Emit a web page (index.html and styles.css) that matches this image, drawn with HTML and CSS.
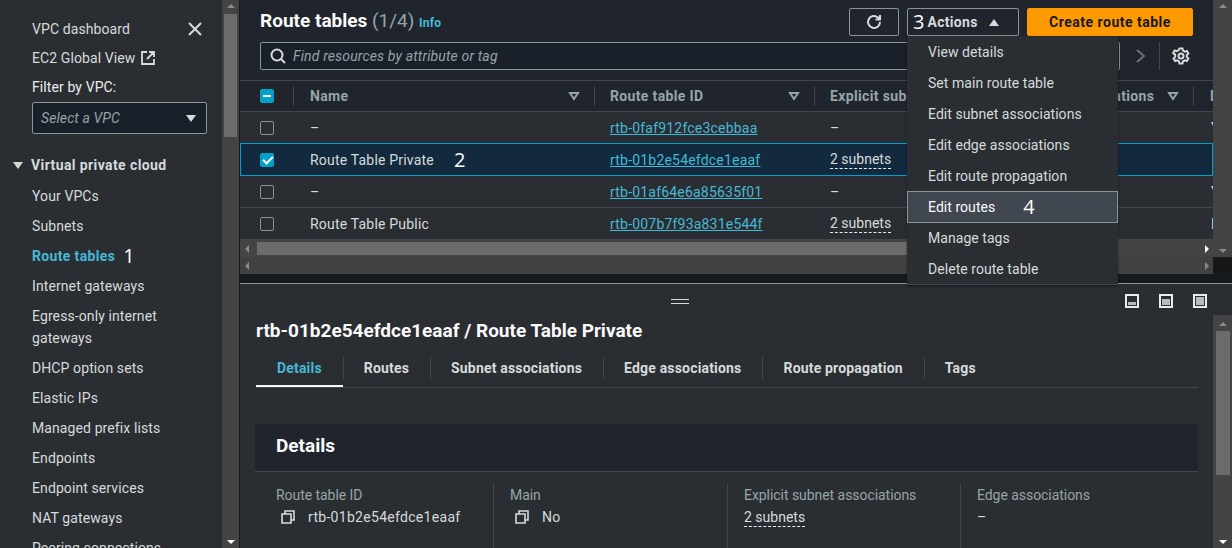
FILE: index.html
```html
<!DOCTYPE html>
<html lang="en">
<head>
  <meta charset="UTF-8" />
  <title>Route tables</title>
  <link rel="stylesheet" href="styles.css">
</head>
<body>
  <div class="app">
    <aside class="sidebar">
      <nav class="side-nav">
        <div class="side-top">
          <a class="side-link">VPC dashboard</a>
          <svg class="close-icon" width="16" height="16" viewBox="0 0 16 16"><path d="M2 2l12 12M14 2L2 14" /></svg>
        </div>
        <a class="side-link ec2-link">EC2 Global View
          <svg class="ext-icon" width="16" height="16" viewBox="0 0 16 16"><path d="M7 2H2v12h12V9M9 2h5v5M14 2L7 9" /></svg>
        </a>
        <div class="filter-label">Filter by VPC:</div>
        <div class="vpc-select"><span>Select a VPC</span><i class="tri-down"></i></div>
        <div class="side-group"><i class="tri-down small"></i>Virtual private cloud</div>
        <a class="side-link">Your VPCs</a>
        <a class="side-link">Subnets</a>
        <a class="side-link active">Route tables<span class="mark mark-nav">1</span></a>
        <a class="side-link">Internet gateways</a>
        <a class="side-link">Egress-only internet gateways</a>
        <a class="side-link">DHCP option sets</a>
        <a class="side-link">Elastic IPs</a>
        <a class="side-link">Managed prefix lists</a>
        <a class="side-link">Endpoints</a>
        <a class="side-link">Endpoint services</a>
        <a class="side-link">NAT gateways</a>
        <a class="side-link">Peering connections</a>
      </nav>
      <div class="vscroll">
        <i class="arrow-up"></i>
        <div class="thumb side-thumb"></div>
        <i class="arrow-down bright"></i>
      </div>
    </aside>

    <main class="content">
      <section class="top-pane">
        <div class="top-main">
          <div class="top-body">
            <header class="list-head">
              <h1>Route tables <span class="count">(1/4)</span> <a class="info">Info</a></h1>
              <div class="head-btns">
                <button class="btn btn-refresh">
                  <svg width="18" height="18" viewBox="0 0 18 18"><path d="M15 9a6 6 0 1 1-2-4.500L15 6.500M15 2v4.500h-4.500" /></svg>
                </button>
                <button class="btn btn-actions"><span class="mark mark-btn">3</span>Actions<i class="tri-up"></i></button>
                <button class="btn btn-create">Create route table</button>
              </div>
            </header>

            <div class="filter-row">
              <div class="search">
                <svg width="16" height="16" viewBox="0 0 16 16"><circle cx="7" cy="7" r="5.500" /><path d="M11 11l4 4" /></svg>
                <span>Find resources by attribute or tag</span>
              </div>
              <svg class="pager" width="12" height="16" viewBox="0 0 12 16"><path d="M2 2l7 6-7 6" /></svg>
              <span class="pager-sep"></span>
              <svg class="gear" width="18" height="18" viewBox="0 0 18 18">
                <circle cx="9" cy="9" r="2.500" />
                <path d="M7.500 1.500h3l.5 2.200 1.800 1 2.100-.7 1.500 2.600-1.600 1.500v1.800l1.600 1.500-1.500 2.600-2.100-.7-1.800 1-.5 2.200h-3l-.5-2.200-1.800-1-2.100.7-1.500-2.600 1.600-1.500V7.600L1.100 6.100l1.500-2.600 2.100.7 1.800-1z" />
              </svg>
            </div>

            <div class="table">
              <div class="row head-row">
                <div class="cell check-cell"><i class="check indeterminate"></i></div>
                <div class="cell">Name<svg class="sort" width="12" height="10" viewBox="0 0 12 10"><path d="M2 2h8L6 8z" /></svg></div>
                <div class="cell">Route table ID<svg class="sort" width="12" height="10" viewBox="0 0 12 10"><path d="M2 2h8L6 8z" /></svg></div>
                <div class="cell">Explicit subnet associations<svg class="sort" width="12" height="10" viewBox="0 0 12 10"><path d="M2 2h8L6 8z" /></svg></div>
                <div class="cell">Edge associations<svg class="sort" width="12" height="10" viewBox="0 0 12 10"><path d="M2 2h8L6 8z" /></svg></div>
                <div class="cell">Main</div>
              </div>
              <div class="row">
                <div class="cell check-cell"><i class="check"></i></div>
                <div class="cell">–</div>
                <div class="cell"><a class="rtb">rtb-0faf912fce3cebbaa</a></div>
                <div class="cell">–</div>
                <div class="cell">–</div>
                <div class="cell">Yes</div>
              </div>
              <div class="row selected">
                <div class="cell check-cell"><i class="check checked"></i></div>
                <div class="cell">Route Table Private<span class="mark mark-row">2</span></div>
                <div class="cell"><a class="rtb">rtb-01b2e54efdce1eaaf</a></div>
                <div class="cell"><span class="dashed">2 subnets</span></div>
                <div class="cell">–</div>
                <div class="cell">No</div>
              </div>
              <div class="row">
                <div class="cell check-cell"><i class="check"></i></div>
                <div class="cell">–</div>
                <div class="cell"><a class="rtb">rtb-01af64e6a85635f01</a></div>
                <div class="cell">–</div>
                <div class="cell">–</div>
                <div class="cell">Yes</div>
              </div>
              <div class="row">
                <div class="cell check-cell"><i class="check"></i></div>
                <div class="cell">Route Table Public</div>
                <div class="cell"><a class="rtb">rtb-007b7f93a831e544f</a></div>
                <div class="cell"><span class="dashed">2 subnets</span></div>
                <div class="cell">–</div>
                <div class="cell">No</div>
              </div>
            </div>
          </div>
          <div class="hscroll">
            <i class="arrow-left"></i>
            <div class="thumb h-thumb"></div>
            <i class="arrow-right bright"></i>
          </div>
          <div class="vscroll top-vscroll">
            <i class="arrow-up"></i>
            <i class="arrow-down"></i>
          </div>
        </div>
        <div class="hscroll-row">
          <div class="hscroll lower">
            <i class="arrow-left"></i>
            <i class="arrow-right"></i>
          </div>
          <div class="corner"></div>
        </div>
        <div class="pane-gap"></div>

        <div class="menu">
          <a>View details</a>
          <a>Set main route table</a>
          <a>Edit subnet associations</a>
          <a>Edit edge associations</a>
          <a>Edit route propagation</a>
          <a class="hover">Edit routes<span class="mark mark-menu">4</span></a>
          <a>Manage tags</a>
          <a>Delete route table</a>
        </div>
      </section>

      <section class="bottom-pane">
        <div class="split-bar">
          <div class="handle"></div>
          <div class="pane-icons">
            <svg width="14" height="14" viewBox="0 0 14 14"><path class="frame" d="M1 1h12v12H1z" /><path class="fill" d="M3 8h8v3H3z" /></svg>
            <svg width="14" height="14" viewBox="0 0 14 14"><path class="frame" d="M1 1h12v12H1z" /><path class="fill" d="M3 5h8v6H3z" /></svg>
            <svg width="14" height="14" viewBox="0 0 14 14"><path class="frame" d="M1 1h12v12H1z" /><path class="fill" d="M3 3h8v8H3z" /></svg>
          </div>
        </div>
        <div class="bottom-main">
          <div class="bottom-body">
            <h2 class="detail-title">rtb-01b2e54efdce1eaaf / Route Table Private</h2>
            <div class="tabs">
              <a class="tab current">Details</a>
              <a class="tab">Routes</a>
              <a class="tab">Subnet associations</a>
              <a class="tab">Edge associations</a>
              <a class="tab">Route propagation</a>
              <a class="tab">Tags</a>
            </div>
            <div class="card">
              <h3 class="card-head">Details</h3>
              <div class="card-cols">
                <div class="col">
                  <div class="col-label">Route table ID</div>
                  <div class="col-value copy-value">
                    <svg width="14" height="14" viewBox="0 0 14 14"><path d="M4 4V1h9v9h-3M1 4h9v9H1z" /></svg>
                    rtb-01b2e54efdce1eaaf
                  </div>
                </div>
                <div class="col">
                  <div class="col-label">Main</div>
                  <div class="col-value copy-value">
                    <svg width="14" height="14" viewBox="0 0 14 14"><path d="M4 4V1h9v9h-3M1 4h9v9H1z" /></svg>
                    No
                  </div>
                </div>
                <div class="col">
                  <div class="col-label">Explicit subnet associations</div>
                  <div class="col-value"><span class="dashed">2 subnets</span></div>
                </div>
                <div class="col">
                  <div class="col-label">Edge associations</div>
                  <div class="col-value">–</div>
                </div>
              </div>
            </div>
          </div>
          <div class="vscroll bottom-vscroll">
            <i class="arrow-up"></i>
            <div class="thumb bottom-thumb"></div>
            <i class="arrow-down bright"></i>
          </div>
        </div>
      </section>
    </main>
  </div>
</body>
</html>
```

FILE: styles.css
```css
* {
  box-sizing: border-box;
  margin: 0;
  padding: 0;
}

body {
  font-family: Roboto, 'Liberation Sans', sans-serif;
  font-size: 14px;
  line-height: 22px;
  letter-spacing: 0.2px;
  background: #2a2e33;
  color: #d5dbdb;
  overflow: hidden;
}

i {
  display: block;
}

svg {
  display: block;
  flex: none;
  fill: none;
  stroke: #d5dbdb;
  stroke-width: 2;
}

.app {
  display: flex;
  width: 1232px;
  height: 548px;
  overflow: hidden;
}

/* hand written numbers drawn on the screenshot */
.mark {
  font-family: 'Open Sans', sans-serif;
  font-size: 20px;
  font-weight: 400;
  line-height: 22px;
  letter-spacing: 0;
  color: #fff;
}

.mark-nav { margin-left: 8px; }
.mark-row { margin-left: 20px; }
.mark-btn { margin-right: 3px; }
.mark-menu { margin-left: 28px; }

/* sidebar */
.sidebar {
  display: flex;
  flex: none;
  width: 240px;
  height: 548px;
  border-right: 1px solid #16191f;
}

.side-nav {
  flex: 1;
  min-width: 0;
  padding: 18px 15px 0 32px;
  overflow: hidden;
  letter-spacing: 0.1px;
}

.side-top {
  display: flex;
  justify-content: space-between;
  padding-right: 4px;
}

.side-link {
  display: block;
  margin-bottom: 8px;
  color: #d5dbdb;
}

.side-link.active {
  display: flex;
  align-items: center;
  color: #44b9d6;
  font-weight: 700;
  letter-spacing: 0.35px;
}

.close-icon {
  margin-top: 3px;
}

.ec2-link {
  display: flex;
  align-items: center;
  gap: 5px;
  margin-top: -1px;
  margin-bottom: 7px;
}

.ext-icon {
  stroke-width: 1.800;
}

.filter-label {
  margin-bottom: 4px;
  color: #eaeded;
}

.vpc-select {
  display: flex;
  align-items: center;
  justify-content: space-between;
  height: 32px;
  padding: 0 10px 0 8px;
  margin-bottom: 20px;
  background: #1a2029;
  border: 1px solid #879596;
  border-radius: 2px;
  font-style: italic;
  color: #95a5a6;
}

.tri-down {
  width: 0;
  height: 0;
  border-left: 5.500px solid transparent;
  border-right: 5.500px solid transparent;
  border-top: 7px solid #d5dbdb;
}

.tri-down.small {
  margin: 0 8px 0 -19px;
}

.side-group {
  display: flex;
  align-items: center;
  margin-bottom: 9px;
  font-weight: 700;
  letter-spacing: 0.4px;
  color: #d5dbdb;
}

/* scrollbars */
.vscroll {
  display: flex;
  flex: none;
  flex-direction: column;
  align-items: center;
  justify-content: space-between;
  width: 17px;
  padding: 4px 0;
  background: #444;
}

.thumb {
  background: #6b6b6b;
}

.side-thumb {
  width: 13px;
  height: 123px;
  margin-top: 6px;
  margin-bottom: auto;
}

.arrow-up,
.arrow-down,
.arrow-left,
.arrow-right {
  width: 0;
  height: 0;
  flex: none;
  border: 4px solid transparent;
}

.arrow-up { border-top: 0; border-bottom: 4px solid #8a8a8a; }
.arrow-down { border-bottom: 0; border-top: 4px solid #8a8a8a; }
.arrow-left { border-left: 0; border-right: 4px solid #8a8a8a; }
.arrow-right { border-right: 0; border-left: 4px solid #8a8a8a; }
.arrow-down.bright { border-top-color: #fff; }
.arrow-right.bright { border-left-color: #fff; }

.hscroll {
  display: flex;
  align-items: center;
  justify-content: space-between;
  height: 17px;
  padding: 0 4px 0 5px;
  background: #444;
}

.h-thumb {
  flex: none;
  width: 760px;
  height: 13px;
  margin-left: 8px;
  margin-right: auto;
}

/* upper pane */
.content {
  display: flex;
  flex: 1;
  min-width: 0;
  flex-direction: column;
}

.top-pane {
  position: relative;
  flex: none;
  height: 284px;
  background: #20252d;
  border-bottom: 1px solid #8d9599;
}

.top-main {
  display: grid;
  grid-template-columns: 973px 19px;
  grid-template-rows: 240px 17px;
  height: 257px;
}

.top-body {
  overflow: hidden;
  min-width: 0;
}

.top-vscroll {
  grid-column: 2;
  grid-row: 1 / 3;
  width: 19px;
}

.hscroll-row {
  display: flex;
  height: 17px;
}

.hscroll.lower {
  flex: none;
  width: 973px;
  background: #414141;
}

.corner {
  flex: 1;
  background: #171717;
}

.pane-gap {
  height: 9px;
  background: #16191f;
}

.list-head {
  display: flex;
  align-items: center;
  justify-content: space-between;
  height: 28px;
  margin-top: 8px;
  padding: 0 20px 0 20px;
}

h1 {
  font-size: 19px;
  font-weight: 700;
  line-height: 28px;
  letter-spacing: 0;
  color: #fafafa;
}

.count {
  font-weight: 400;
  color: #95a5a6;
}

.info {
  font-size: 12px;
  letter-spacing: 0.2px;
  color: #44b9d6;
}

.head-btns {
  display: flex;
  gap: 8px;
}

.btn {
  display: flex;
  align-items: center;
  justify-content: center;
  height: 28px;
  font-family: inherit;
  font-size: 14px;
  font-weight: 700;
  letter-spacing: 0.3px;
  background: transparent;
  color: #d5dbdb;
  border: 1px solid #879596;
  border-radius: 2px;
}

.btn-refresh {
  width: 50px;
}

.btn-actions {
  justify-content: flex-start;
  width: 112px;
  padding-left: 5px;
}

.tri-up {
  width: 0;
  height: 0;
  margin-left: 11px;
  border-left: 5.500px solid transparent;
  border-right: 5.500px solid transparent;
  border-bottom: 7px solid #d5dbdb;
}

.btn-create {
  width: 166px;
  background: #ff9900;
  border-color: #ff9900;
  color: #16191f;
  letter-spacing: 0.5px;
}

.filter-row {
  display: flex;
  align-items: center;
  height: 28px;
  margin-top: 6px;
  padding-left: 20px;
}

.search {
  display: flex;
  align-items: center;
  gap: 7px;
  width: 860px;
  height: 28px;
  padding-left: 9px;
  background: #1a2029;
  border: 1px solid #879596;
  border-radius: 2px;
  font-style: italic;
  letter-spacing: 0.15px;
  color: #95a5a6;
}

.pager {
  margin-left: 15px;
  stroke: #687078;
}

.pager-sep {
  width: 1px;
  height: 28px;
  margin-left: 12px;
  background: #414750;
}

.gear {
  margin-left: 12px;
}

/* table */
.table {
  margin-top: 10px;
  border-top: 1px solid #414750;
}

.row {
  display: grid;
  grid-template-columns: 53px 301px 220px 204px 175px 1fr;
  height: 32px;
  background: #2a2e33;
  border-bottom: 1px solid #414750;
}

.cell {
  display: flex;
  align-items: center;
  padding-left: 16px;
  min-width: 0;
  white-space: nowrap;
  overflow: hidden;
}

.check-cell {
  padding-left: 20px;
}

.row .cell:nth-child(2) {
  padding-left: 17px;
}

.row .cell:nth-child(6) {
  padding-left: 18px;
}

.head-row {
  height: 31px;
  background: #20252d;
  font-weight: 700;
  letter-spacing: 0.35px;
  color: #95a5a6;
}

.head-row .cell {
  justify-content: space-between;
  padding-left: 15px;
  padding-right: 14px;
  margin: 5px 0;
  border-left: 1px solid #414750;
}

.head-row .cell:nth-child(2) {
  padding-left: 16px;
}

.head-row .cell:nth-child(6) {
  padding-left: 16px;
}

.head-row .check-cell {
  padding-left: 20px;
  border-left: 0;
}

.sort {
  stroke: #95a5a6;
}

.row.selected {
  height: 33px;
  margin-top: -1px;
  background: #12293e;
  border: 1px solid #00a1c9;
}

.selected .check-cell {
  padding-left: 19px;
}

.row.selected .cell:nth-child(2) {
  padding-left: 16px;
}

.selected .cell:nth-child(3),
.selected .cell:nth-child(4) {
  padding-left: 15px;
}

.check {
  width: 14px;
  height: 14px;
  background: #2a2e33;
  border: 1px solid #879596;
  border-radius: 2px;
}

.check.checked,
.check.indeterminate {
  background: #00a1c9;
  border-color: #00a1c9;
}

.check.indeterminate::after {
  content: "";
  display: block;
  width: 8px;
  height: 2px;
  margin: 5px 2px;
  background: #fff;
}

.check.checked::after {
  content: "";
  display: block;
  width: 8px;
  height: 4px;
  margin: 2px 2px;
  border-left: 2px solid #fff;
  border-bottom: 2px solid #fff;
  transform: rotate(-45deg);
}

.rtb {
  color: #44b9d6;
  text-decoration: underline;
}

.dashed {
  color: #d5dbdb;
  border-bottom: 1px dashed #eaeded;
  line-height: 17px;
  letter-spacing: 0;
}

/* actions dropdown */
.menu {
  position: absolute;
  top: 36px;
  left: 667px;
  width: 211px;
  height: 249px;
  background: #2a2e33;
  border-bottom: 1px solid #414750;
  box-shadow: 0 1px 2px rgba(0, 0, 0, 0.5);
  letter-spacing: 0.05px;
}

.menu a {
  display: flex;
  align-items: center;
  height: 31px;
  padding-left: 21px;
  color: #d5dbdb;
}

.menu a.hover {
  height: 32px;
  padding-left: 20px;
  margin-bottom: -1px;
  background: #414750;
  border: 1px solid #879596;
  color: #fafafa;
}

/* lower pane */
.bottom-pane {
  flex: 1;
  min-height: 0;
  display: flex;
  flex-direction: column;
}

.split-bar {
  display: flex;
  align-items: center;
  justify-content: center;
  position: relative;
  flex: none;
  height: 31px;
  padding-right: 112px;
}

.handle {
  width: 18px;
  height: 5px;
  margin-top: 3px;
  border-top: 1px solid #d5dbdb;
  border-bottom: 1px solid #d5dbdb;
}

.pane-icons {
  position: absolute;
  top: 10px;
  right: 25px;
  display: flex;
  gap: 20px;
}

.pane-icons .frame {
  stroke: #eaeded;
  stroke-width: 2;
}

.pane-icons .fill {
  fill: #b5bcc0;
  stroke: none;
}

.bottom-main {
  display: flex;
  flex: 1;
  min-height: 0;
}

.bottom-body {
  flex: 1;
  min-width: 0;
  padding: 4px 15px 0 16px;
  overflow: hidden;
}

.bottom-vscroll {
  width: 19px;
  padding-top: 7px;
}

.bottom-thumb {
  width: 14px;
  height: 144px;
  margin-top: 5px;
  margin-bottom: auto;
}

.detail-title {
  font-size: 19px;
  font-weight: 700;
  line-height: 24px;
  letter-spacing: 0;
  color: #fafafa;
}

.tabs {
  display: flex;
  height: 33px;
  margin-top: 12px;
  border-bottom: 1px solid #414750;
}

.tab {
  display: flex;
  align-items: center;
  position: relative;
  height: 32px;
  padding: 0 21px 6px;
  font-weight: 700;
  letter-spacing: 0.18px;
  color: #d5dbdb;
}

.tab + .tab::before {
  content: "";
  position: absolute;
  left: 0;
  top: 2px;
  height: 22px;
  width: 1px;
  background: #414750;
}

.tab.current {
  color: #44b9d6;
  box-shadow: inset 0 -2px 0 #fafafa;
}

.card {
  margin-top: 36px;
  margin-left: -1px;
  background: #2a2e33;
}

.card-head {
  height: 48px;
  padding: 10px 21px 0;
  font-size: 19px;
  font-weight: 700;
  line-height: 24px;
  letter-spacing: 0;
  color: #fafafa;
  background: #20252d;
  border-bottom: 1px solid #414750;
}

.card-cols {
  display: grid;
  grid-template-columns: 238px 234px 233px 1fr;
  padding-top: 12px;
}

.col {
  height: 80px;
  padding-left: 16px;
  border-left: 1px solid #414750;
}

.col:first-child {
  padding-left: 21px;
  border-left: 0;
}

.col-label {
  letter-spacing: -0.05px;
  color: #95a5a6;
}

.col-value {
  display: flex;
  align-items: center;
  letter-spacing: 0.3px;
}

.col-value .dashed {
  margin-top: 3px;
  letter-spacing: 0;
}

.copy-value {
  gap: 13px;
  padding-left: 5px;
}

.copy-value svg {
  stroke-width: 1.600;
}
```
